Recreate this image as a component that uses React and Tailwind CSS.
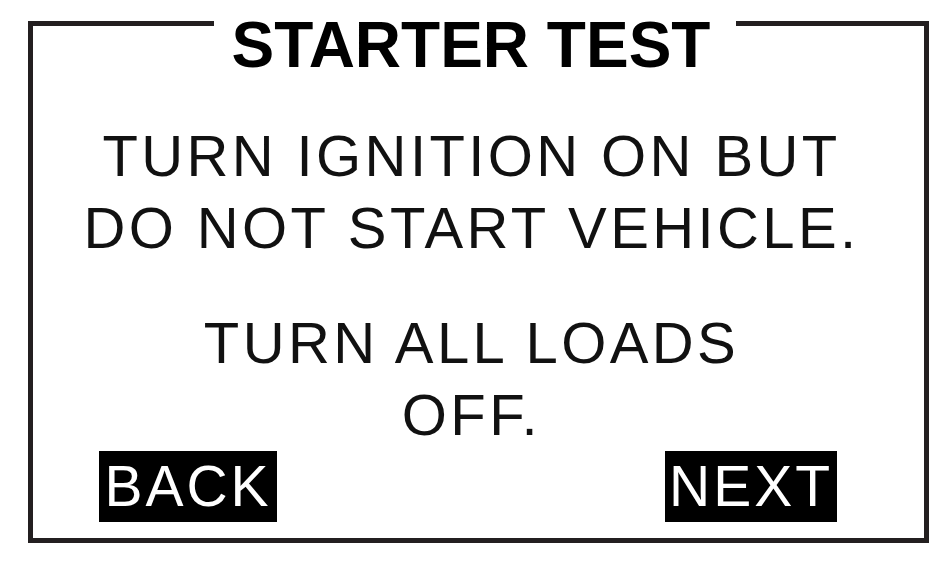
import React from "react";

const lines = [
  ["TURN IGNITION ON BUT", "DO NOT START VEHICLE."],
  ["TURN ALL LOADS", "OFF."],
];

const App = () => {
  return (
    <div className="w-[948px] h-[567px] bg-white pt-[21px] pl-[28px] font-['Liberation_Sans',Arial,sans-serif]">
      <div className="w-[901px] h-[522px] border-x-[5px] border-b-[5px] border-[#231f20] flex flex-col">
        <div className="flex items-start">
          <div className="w-[181px] border-t-[5px] border-[#231f20]" />
          <h1 className="w-[522px] pr-[8px] text-center text-[64px] leading-[48px] font-bold text-black">
            STARTER TEST
          </h1>
          <div className="flex-1 border-t-[5px] border-[#231f20]" />
        </div>

        <div className="mt-[51px] pr-[14px] flex flex-col gap-[43px] text-center text-[58px] leading-[72px] tracking-[3.4px] text-[#111]">
          {lines.map((group, i) => (
            <div key={i}>
              {group.map((line) => (
                <p key={line}>{line}</p>
              ))}
            </div>
          ))}
        </div>

        <div className="flex justify-between pl-[66px] pr-[87px]">
          <button className="w-[178px] h-[71px] bg-black text-white text-[57px] leading-[71px] tracking-[3px] text-center">
            BACK
          </button>
          <button className="w-[172px] h-[71px] bg-black text-white text-[57px] leading-[71px] tracking-[3px] text-center">
            NEXT
          </button>
        </div>
      </div>
    </div>
  );
};

export default App;
